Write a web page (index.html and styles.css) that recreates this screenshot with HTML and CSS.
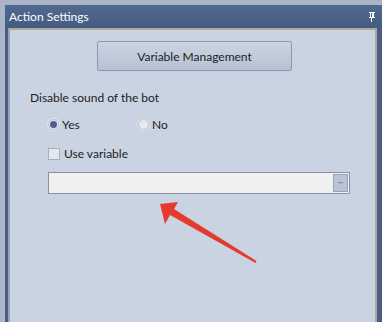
FILE: index.html
```html
<!DOCTYPE html>
<html lang="en">
<head>
  <meta charset="UTF-8" />
  <title>Action Settings</title>
  <link rel="stylesheet" href="styles.css">
</head>
<body>
  <div class="dock">
    <div class="title-bar">
      <span class="title">Action Settings</span>
      <svg class="pin" width="10" height="10" viewBox="0 0 10 10">
        <path d="M2 0h6v1h-1v4h1v1H2V5h1V1H2z M4 1v4h1V1z" fill="#fff" fill-rule="evenodd"/>
        <rect x="4" y="6" width="1" height="4" fill="#fff"/>
      </svg>
    </div>
    <div class="panel">
      <button class="btn">Variable Management</button>
      <div class="label">Disable sound of the bot</div>
      <div class="radios">
        <label class="radio checked"><span class="dot"></span>Yes</label>
        <label class="radio"><span class="dot"></span>No</label>
      </div>
      <label class="check"><span class="box"></span>Use variable</label>
      <div class="combo">
        <span class="drop"><span class="caret"></span></span>
      </div>
    </div>
  </div>

  <svg class="arrow" width="382" height="322" viewBox="0 0 382 322">
    <polygon points="160,204 178,202 174,209 256.5,261 255.5,263 170,215 165,224" fill="#e53b2f"/>
  </svg>
</body>
</html>
```

FILE: styles.css
```css
* {
  margin: 0;
  padding: 0;
  box-sizing: border-box;
}

body {
  width: 382px;
  height: 322px;
  overflow: hidden;
  position: relative;
  background: #aab5c8;
  font-family: Lato, sans-serif;
  font-size: 12px;
  color: #1c1c1c;
  padding: 5px 0 0 5px;
}

.dock {
  height: 317px;
  background: #4a5e84;
  display: flex;
  flex-direction: column;
}

.title-bar {
  height: 23px;
  display: flex;
  align-items: center;
  justify-content: space-between;
  padding: 0 5px 0 4px;
  background: linear-gradient(#52698f, #445a82);
  color: #fff;
}

.title {
  font-size: 12px;
}

.pin {
  display: block;
}

.panel {
  flex: 1;
  margin: 0 5px 0 3px;
  border: 2px solid #a9aa9c;
  border-bottom: none;
  border-left-color: #9aa4b4;
  background: #c9d3e2;
  padding: 11px 0 0 0;
}

.btn {
  display: block;
  margin-left: 87px;
  width: 195px;
  height: 30px;
  border: 1px solid #8c98ae;
  border-radius: 2px;
  background: linear-gradient(#ccd5e2, #b5c1d3);
  font-family: inherit;
  font-size: 12px;
  color: #1c1c1c;
}

.label {
  margin: 19px 0 0 20px;
}

.radios {
  display: flex;
  margin: 12px 0 0 38px;
}

.radio {
  display: flex;
  align-items: center;
  gap: 3px;
  width: 90px;
}

.dot {
  width: 11px;
  height: 11px;
  border-radius: 50%;
  border: 1px solid #b4bccb;
  background: #e8eaee;
  box-shadow: 0 0 0 1px #dfe5ee;
  position: relative;
}

.radio.checked .dot::after {
  content: "";
  position: absolute;
  left: 1px;
  top: 1px;
  width: 7px;
  height: 7px;
  border-radius: 50%;
  background: #4a6190;
}

.check {
  display: flex;
  align-items: center;
  gap: 4px;
  margin: 14px 0 0 38px;
}

.box {
  width: 12px;
  height: 12px;
  border: 1px solid #a7b0be;
  background: #e4e7ec;
}

.combo {
  margin: 11px 0 0 38px;
  width: 302px;
  height: 22px;
  border: 1px solid #8893a6;
  background: #f0f0f0;
  display: flex;
  justify-content: flex-end;
  padding: 1px;
}

.drop {
  width: 15px;
  height: 18px;
  background: #b9c5d6;
  border: 1px solid #96a3b8;
  display: flex;
  align-items: center;
  justify-content: center;
}

.caret {
  width: 5px;
  height: 2px;
  border-top: 1px solid #8a8f98;
  border-bottom: 1px solid #b0b3b8;
}

.arrow {
  position: absolute;
  left: 0;
  top: 0;
}
```
